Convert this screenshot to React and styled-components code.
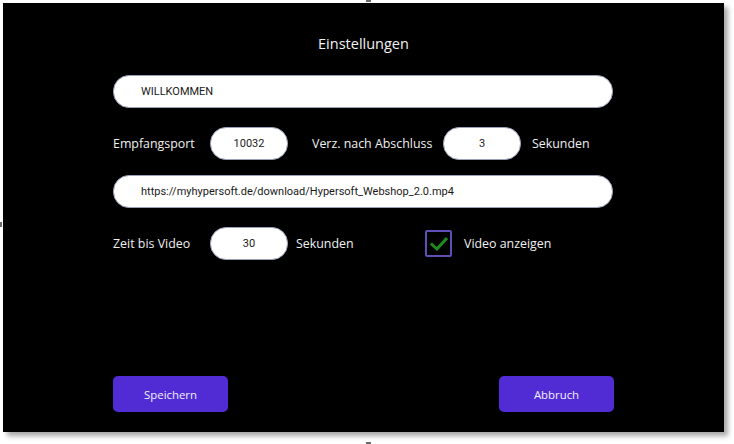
import React, { useState } from "react"
import styled, { createGlobalStyle } from "styled-components"

const GlobalStyle = createGlobalStyle`
	html, body {
		margin: 0;
		padding: 0;
		background: #ffffff;
	}
	* {
		box-sizing: border-box;
	}
`

const Stage = styled.div`
	position: relative;
	width: 734px;
	height: 444px;
	padding: 3px 0 0 3px;
	background: #ffffff;
`

// small grey handles around the captured window
const Handle = styled.span`
	position: absolute;
	background: #6b6b6b;
	width: ${(p) => (p.$vertical ? "2px" : "5px")};
	height: ${(p) => (p.$vertical ? "5px" : "2px")};
	left: ${(p) => p.$x}px;
	top: ${(p) => p.$y}px;
`

const Window = styled.div`
	width: 721px;
	height: 429px;
	background: #000000;
	box-shadow: 4px 4px 5px rgba(0, 0, 0, 0.35);
	display: flex;
	flex-direction: column;
	padding: 0 110px 20px 110px;
	font-family: "Open Sans", "Noto Sans", sans-serif;
	color: #ffffff;
`

const Title = styled.h1`
	margin: 31px 0 0;
	font-size: 14.5px;
	font-weight: 400;
	line-height: 20px;
	text-align: center;
	color: #f2f2f2;
`

const Field = styled.input`
	display: block;
	width: ${(p) => p.$width || "500px"};
	height: 33px;
	border-radius: 16px;
	border: 1px solid #9aa0b8;
	background: #ffffff;
	font-family: Roboto, "Liberation Sans", sans-serif;
	font-size: 11px;
	color: #1a1a1a;
	text-align: ${(p) => (p.$center ? "center" : "left")};
	padding: 0 ${(p) => (p.$center ? "0" : "27px")};
	outline: none;
	flex: none;
`

const Row = styled.div`
	display: flex;
	align-items: center;
	height: 33px;
	margin-top: ${(p) => p.$top}px;
`

const Label = styled.span`
	font-size: 12.4px;
	line-height: 18px;
	color: #f0f0f0;
	width: ${(p) => (p.$width ? `${p.$width}px` : "auto")};
	padding-left: ${(p) => p.$left || 0}px;
	white-space: nowrap;
	flex: none;
`

const CheckBox = styled.button`
	width: 27px;
	height: 27px;
	margin-right: 12px;
	padding: 0;
	border: 2px solid #5e4fb8;
	border-radius: 2px;
	background: #000000;
	display: flex;
	align-items: center;
	justify-content: center;
	cursor: pointer;
	flex: none;
`

const Spacer = styled.div`
	flex: 1;
`

const Footer = styled.div`
	display: flex;
	justify-content: space-between;
	width: 501px;
`

const Button = styled.button`
	width: 115px;
	height: 36px;
	border: none;
	border-radius: 5px;
	background: #512bd4;
	color: #f4f0ff;
	font-family: "Open Sans", "Noto Sans", sans-serif;
	font-size: 11.4px;
	cursor: pointer;
`

const App = () => {
	const [showVideo, setShowVideo] = useState(true)

	return (
		<>
			<GlobalStyle />
			<Stage>
				<Handle $x={366} $y={0} />
				<Handle $x={0} $y={222} $vertical />
				<Handle $x={366} $y={442} />
				<Window>
					<Title>Einstellungen</Title>
					<Row $top={21}>
						<Field defaultValue="WILLKOMMEN" />
					</Row>

					<Row $top={19}>
						<Label $width={97}>Empfangsport</Label>
						<Field $width="78px" $center defaultValue="10032" />
						<Label $width={155} $left={24}>
							Verz. nach Abschluss
						</Label>
						<Field $width="78px" $center defaultValue="3" />
						<Label $left={11}>Sekunden</Label>
					</Row>

					<Row $top={15}>
						<Field defaultValue="https://myhypersoft.de/download/Hypersoft_Webshop_2.0.mp4" />
					</Row>

					<Row $top={19}>
						<Label $width={97}>Zeit bis Video</Label>
						<Field $width="78px" $center defaultValue="30" />
						<Label $width={137} $left={8}>
							Sekunden
						</Label>
						<CheckBox onClick={() => setShowVideo(!showVideo)}>
							{showVideo && (
								<svg width="20" height="20" viewBox="0 0 20 20">
									<path
										d="M3 10.5 L8 15 L17 5"
										fill="none"
										stroke="#1c8c1c"
										strokeWidth="3"
										strokeLinecap="square"
									/>
								</svg>
							)}
						</CheckBox>
						<Label>Video anzeigen</Label>
					</Row>

					<Spacer />
					<Footer>
						<Button>Speichern</Button>
						<Button>Abbruch</Button>
					</Footer>
				</Window>
			</Stage>
		</>
	)
}

export default App
